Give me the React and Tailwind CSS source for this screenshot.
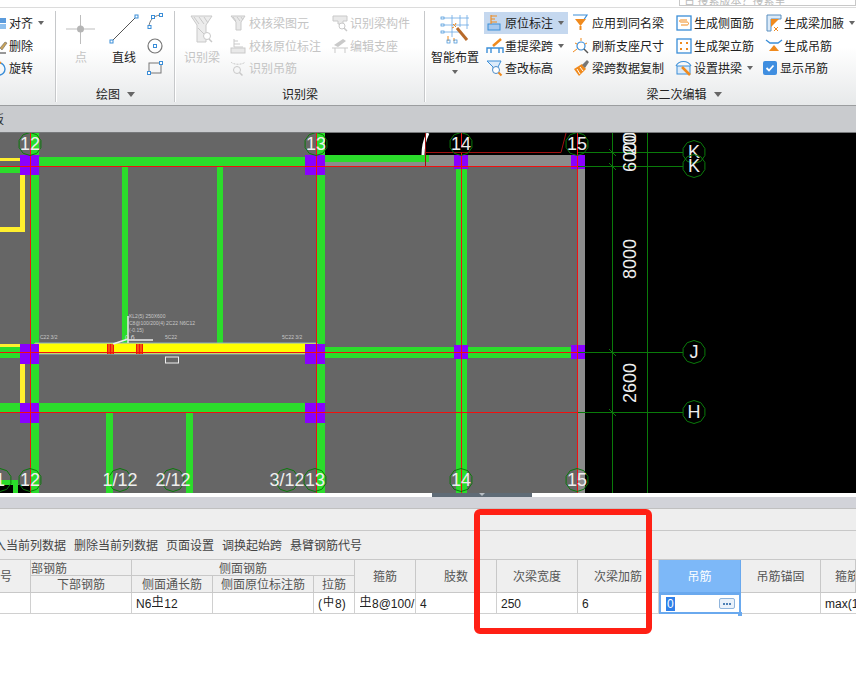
import React from "react";

const GREEN = "#2bdc2b";
const PURPLE = "#8a00ff";
const RED = "#f01010";
const DARK = "#0a7a0a";
const BLUE = "#3b8ed8";
const ORANGE = "#f08a1d";
const OFF = "#c9c9c9";

const Ico = ({ w = 18, h = 18, children }) => (
  <svg width={w} height={h} viewBox={`0 0 ${w} ${h}`} fill="none" className="shrink-0">
    {children}
  </svg>
);

const Caret = ({ className = "" }) => (
  <span className={`inline-block w-0 h-0 border-x-[3px] border-t-[4px] border-x-transparent border-t-[#666] ${className}`} />
);

const Item = ({ icon, label, caret, off, active, className = "" }) => (
  <div className={`flex items-center h-full whitespace-nowrap ${active ? "bg-[#c5d8ef]" : ""} ${off ? "text-[#c4c4c4]" : "text-[#222]"} ${className}`}>
    {icon}
    <span className="ml-px">{label}</span>
    {caret && <Caret className="ml-[5px]" />}
  </div>
);

const Col = ({ className = "", children }) => (
  <div className={`grid grid-rows-[22px_23px_22px] pt-1 h-[71px] ${className}`}>{children}</div>
);

const Big = ({ icon, label, off, caret, className = "" }) => (
  <div className={`flex flex-col items-center pt-1.5 shrink-0 ${className}`}>
    <div className="h-[30px] flex items-center justify-center">{icon}</div>
    <div className={`mt-1 h-[18px] leading-[18px] whitespace-nowrap ${off ? "text-[#c4c4c4]" : "text-[#222]"}`}>{label}</div>
    {caret && <Caret className="mt-1" />}
  </div>
);

const Section = ({ width, label, caret, labelClass = "", children }) => (
  <div className={`flex flex-col shrink-0 overflow-hidden ${width}`}>
    <div className="flex h-[77px]">{children}</div>
    <div className={`h-[18px] flex items-center justify-center gap-[7px] text-[#222] ${labelClass}`}>
      {label}
      {caret && <Caret className="border-x-[4px] border-t-[5px]" />}
    </div>
  </div>
);

const Sep = () => <div className="w-[2px] my-[3px] shrink-0 border-l border-[#c6c8ca] bg-white" />;

const Sq = ({ x, y }) => <rect x={x - 1.5} y={y - 1.5} width="3" height="3" fill="#fff" stroke={BLUE} />;

// small gray beam cross-section used by the disabled commands
const BeamOff = () => (
  <Ico>
    <path d="M2 2h14l-4 6v8H7V8z" stroke={OFF} fill="#e9e9e9" />
    <path d="M4 3l3 4M8 3l3 4M12 3l2 3" stroke={OFF} />
  </Ico>
);

const ic = {
  align: (
    <Ico w={8}>
      <rect x="-3" y="4" width="9" height="5" fill="#5b9bdc" />
      <rect x="-3" y="10" width="9" height="5" fill="#8fc0ee" />
    </Ico>
  ),
  del: (
    <Ico w={8}>
      <path d="M0 11l5-6 2 1-5 7z" fill="#c9a45a" stroke="#555" strokeWidth=".5" />
      <path d="M0 16h6" stroke="#333" />
    </Ico>
  ),
  rot: (
    <Ico w={8}>
      <circle cx="-1" cy="10" r="6" stroke={BLUE} strokeWidth="1.4" />
      <path d="M-2 3l3 1" stroke={ORANGE} strokeWidth="2" />
    </Ico>
  ),
  point: (
    <Ico w={30} h={30}>
      <path d="M0 15h29M14.5 1v29" stroke="#bdbdbd" />
      <circle cx="14.5" cy="15" r="3.5" fill="#b5b5b5" />
    </Ico>
  ),
  line: (
    <Ico w={30} h={30}>
      <path d="M3 27L27 3" stroke="#555" />
      <Sq x={2.5} y={27.5} />
      <Sq x={27.5} y={2.5} />
    </Ico>
  ),
  arc: (
    <Ico>
      <path d="M3 15C3 9 7 4 14 3" stroke="#777" />
      <Sq x={3.5} y={15} />
      <Sq x={7} y={5} />
      <Sq x={15} y={3} />
    </Ico>
  ),
  circle: (
    <Ico>
      <circle cx="9" cy="9" r="7" stroke="#777" strokeWidth="1.2" />
      <Sq x={9} y={9} />
    </Ico>
  ),
  rect: (
    <Ico>
      <rect x="3" y="4" width="12" height="10" stroke="#777" />
      <Sq x={3} y={14} />
      <Sq x={15} y={4} />
    </Ico>
  ),
  bigBeam: (
    <Ico w={26} h={30}>
      <path d="M2 2h21l-6 9v17H8V11z" stroke={OFF} fill="#ececec" />
      <path d="M5 3l5 7M10 3l5 7M15 3l4 6M9 14l7 7" stroke={OFF} />
      <circle cx="18" cy="22" r="3.5" stroke={OFF} fill="#fff" />
      <path d="M20 25l3 3" stroke={OFF} strokeWidth="1.5" />
    </Ico>
  ),
  check: <BeamOff />,
  checkNote: (
    <Ico>
      <path d="M5 2v8h9" stroke={OFF} />
      <path d="M5 4h4M5 7h6" stroke={OFF} />
      <rect x="2" y="11" width="14" height="5" stroke={OFF} fill="#e9e9e9" />
    </Ico>
  ),
  hang: (
    <Ico>
      <path d="M2 3c2 3 12 3 14 0" stroke={OFF} strokeDasharray="2 1" />
      <circle cx="8" cy="11" r="3.5" stroke={OFF} />
      <path d="M10.5 13.5l3 3" stroke={OFF} strokeWidth="1.5" />
    </Ico>
  ),
  support: (
    <Ico>
      <path d="M3 8l9-6 3 2-8 6z" fill={OFF} />
      <path d="M1 11h16M4 11v5M14 11v5" stroke={OFF} />
    </Ico>
  ),
  smart: (
    <Ico w={30} h={30}>
      <path d="M4 4h25M4 11h25M4 18h16M12 1v22M20 1v12M27 1v14" stroke="#6aa8e4" strokeWidth=".8" />
      <path d="M17 14l10 12" stroke="#b86a2a" strokeWidth="3" />
      <path d="M13 10l3 3M12 14l2-1M16 9l-1 2" stroke={ORANGE} />
      <rect x="1" y="3" width="3" height="2" stroke={BLUE} strokeWidth=".7" />
      <rect x="1" y="10" width="3" height="2" stroke={BLUE} strokeWidth=".7" />
      <rect x="1" y="17" width="3" height="2" stroke={BLUE} strokeWidth=".7" />
      <path d="M8 22v5M14 24v3" stroke={ORANGE} />
      <rect x="7" y="26" width="3" height="3" stroke={BLUE} strokeWidth=".7" />
      <rect x="14" y="26" width="3" height="3" stroke={BLUE} strokeWidth=".7" />
    </Ico>
  ),
  origin: (
    <Ico>
      <rect x="2" y="10" width="12" height="6" fill="#a6c8ee" stroke={BLUE} />
      <path d="M5 1v9M5 2h6M5 5h4M5 8h6" stroke={ORANGE} strokeWidth="1.1" />
    </Ico>
  ),
  relift: (
    <Ico>
      <path d="M1 16v-5h16v5M5 11v5M13 11v5" stroke={BLUE} strokeWidth="1.4" />
      <path d="M7 9l8-7" stroke={ORANGE} strokeWidth="2.5" />
    </Ico>
  ),
  height: (
    <Ico>
      <path d="M1 2h14l-3 6v3H7V8z" stroke={BLUE} fill="#dcebf9" />
      <circle cx="10" cy="11" r="3.5" stroke="#4d8cc8" fill="#fff" />
      <path d="M12.5 13.5l3 3" stroke={ORANGE} strokeWidth="2" />
    </Ico>
  ),
  apply: (
    <Ico>
      <path d="M1 1h14l-4 6" stroke={BLUE} strokeWidth="1.2" />
      <path d="M3 5h11l-5.5 7z" fill={ORANGE} />
      <path d="M8.5 12v4" stroke={ORANGE} strokeWidth="2" />
    </Ico>
  ),
  refresh: (
    <Ico>
      <circle cx="9" cy="9" r="4" stroke={BLUE} strokeWidth="1.2" />
      <path d="M9 1v3M3 6l2 1M15 6l-2 1M1 15l4-3" stroke={ORANGE} />
      <path d="M12 12l4 4" stroke="#555" strokeWidth="1.5" />
    </Ico>
  ),
  copy: (
    <Ico>
      <path d="M2 10l8-5 4 5-7 7z" fill={ORANGE} />
      <path d="M10 6l5-5 2 2-4 6z" fill="#777" />
      <path d="M5 10l3 5M8 8l3 4" stroke="#fff" />
    </Ico>
  ),
  side: (
    <Ico>
      <rect x="2" y="2" width="14" height="14" stroke={BLUE} strokeWidth="1.3" />
      <path d="M12 6H6c-2 0-2 2 0 2h6c2 0 2 3 0 3H6" stroke={ORANGE} />
    </Ico>
  ),
  frame: (
    <Ico>
      <rect x="2" y="2" width="14" height="14" stroke={BLUE} strokeWidth="1.3" />
      <path d="M5 5h2v2H5zM11 5h2v2h-2zM5 11h2v2H5zM11 11h2v2h-2z" fill={ORANGE} />
    </Ico>
  ),
  arch: (
    <Ico>
      <path d="M1 7C4 1 13 1 16 7" stroke={BLUE} strokeWidth="1.2" />
      <rect x="2" y="7" width="13" height="8" stroke={BLUE} fill="#dcebf9" />
      <path d="M7 8l8 8" stroke={ORANGE} strokeWidth="2.5" />
    </Ico>
  ),
  haunch: (
    <Ico>
      <path d="M2 1h14v4H6v12H2z" stroke="#5a8fbf" fill="#dcebf9" />
      <path d="M6 5h8L6 13z" fill={ORANGE} />
      <path d="M9 13l4 4M13 13l-4 4" stroke={ORANGE} />
    </Ico>
  ),
  hanger: (
    <Ico>
      <path d="M1 3l4 3h8l4-3" stroke={BLUE} strokeWidth="1.3" />
      <path d="M4 14l5-6 5 6z" fill={ORANGE} />
    </Ico>
  ),
  checked: (
    <span className="w-[14px] h-[14px] mr-[2px] rounded-[2px] bg-[#3f8ee0] flex items-center justify-center shrink-0">
      <svg width="10" height="10" viewBox="0 0 10 10" fill="none">
        <path d="M1.5 5l2.5 2.5 4.5-5" stroke="#fff" strokeWidth="1.8" />
      </svg>
    </span>
  ),
  copyOff: (
    <Ico>
      <path d="M2 2h14v5h-4v3H7V7H2z" stroke={OFF} fill="#e9e9e9" />
      <circle cx="11" cy="12" r="3" stroke={OFF} fill="#fff" />
      <path d="M13 14l3 3" stroke={OFF} strokeWidth="1.5" />
    </Ico>
  ),
};

const Ribbon = () => (
  <div className="flex h-[97px] border-b border-[#9b9d9f] bg-gradient-to-b from-white from-40% to-[#e7e9ea] box-content">
    <Section width="w-[55px]">
      <Col>
        <Item icon={ic.align} label="对齐" caret />
        <Item icon={ic.del} label="删除" />
        <Item icon={ic.rot} label="旋转" />
      </Col>
    </Section>
    <Sep />
    <Section width="w-[117px]" label="绘图" caret>
      <Big className="w-12" icon={ic.point} label="点" off />
      <Big className="w-[38px]" icon={ic.line} label="直线" />
      <Col className="w-6 justify-items-center">
        {ic.arc}
        <div className="self-center">{ic.circle}</div>
        <div className="self-center">{ic.rect}</div>
      </Col>
    </Section>
    <Sep />
    <Section width="w-[248px]" label="识别梁">
      <Big className="w-[52px]" icon={ic.bigBeam} label="识别梁" off />
      <Col className="w-[103px] pl-px">
        <Item icon={ic.check} label="校核梁图元" off className="gap-px" />
        <Item icon={ic.checkNote} label="校核原位标注" off className="gap-px" />
        <Item icon={ic.hang} label="识别吊筋" off className="gap-px" />
      </Col>
      <Col>
        <Item icon={ic.copyOff} label="识别梁构件" off />
        <Item icon={ic.support} label="编辑支座" off />
      </Col>
    </Section>
    <Sep />
    <Section width="flex-1 min-w-0" label="梁二次编辑" caret labelClass="pl-[86px]">
      <Big className="w-[58px]" icon={ic.smart} label="智能布置" caret />
      <Col className="w-[86px]">
        <Item icon={ic.origin} label="原位标注" caret active className="pl-0.5 mr-0.5" />
        <Item icon={ic.relift} label="重提梁跨" caret className="pl-0.5" />
        <Item icon={ic.height} label="查改标高" className="pl-0.5" />
      </Col>
      <Col className="w-[105px]">
        <Item icon={ic.apply} label="应用到同名梁" className="pl-0.5 gap-px" />
        <Item icon={ic.refresh} label="刷新支座尺寸" className="pl-0.5 gap-px" />
        <Item icon={ic.copy} label="梁跨数据复制" className="pl-0.5 gap-px" />
      </Col>
      <Col className="w-[90px]">
        <Item icon={ic.side} label="生成侧面筋" />
        <Item icon={ic.frame} label="生成架立筋" />
        <Item icon={ic.arch} label="设置拱梁" caret />
      </Col>
      <Col className="flex-1 min-w-0">
        <Item icon={ic.haunch} label="生成梁加腋" caret />
        <Item icon={ic.hanger} label="生成吊筋" />
        <Item icon={ic.checked} label="显示吊筋" className="-ml-0.5" />
      </Col>
    </Section>
  </div>
);

// rough decagon, the axis bubbles in the CAD view aren't true circles
const bubble = (cx, cy, r = 11.5) =>
  Array.from({ length: 10 }, (_, i) => {
    const a = (Math.PI / 5) * i + Math.PI / 10;
    return `${(cx + r * Math.cos(a)).toFixed(1)},${(cy + r * Math.sin(a)).toFixed(1)}`;
  }).join(" ");

const Axis = ({ x, y, t, size = 18 }) => (
  <g>
    <polygon points={bubble(x, y)} stroke={DARK} fill="none" />
    <text x={x} y={y + size * 0.36} textAnchor="middle" fontSize={size} fill="#eee">
      {t}
    </text>
  </g>
);

const R = ({ x, y, w, h, f }) => <rect x={x} y={y} width={w} height={h} fill={f} />;

const Dim = ({ y, t }) => (
  <text x="0" y="0" transform={`translate(636 ${y}) rotate(-90)`} textAnchor="middle" fontSize="18" fill="#eee">
    {t}
  </text>
);

const Canvas = () => (
  <svg width="856" height="360" viewBox="0 133 856 360" className="block bg-black font-['Liberation_Sans',sans-serif]">
    {/* slab */}
    <R x={0} y={133} w={325} h={360} f="#666" />
    <R x={325} y={162} w={253} h={331} f="#666" />
    <R x={325} y={155} w={253} h={11} f="#8c8c8c" />
    <R x={578} y={155} w={7} h={338} f="#8c8c8c" />

    {/* left part, yellow edge beams */}
    <R x={0} y={158} w={20} h={3} f="#ffef2e" />
    <R x={0} y={167} w={20} h={6} f={GREEN} />
    <R x={20} y={175} w={5} h={57} f="#ffef2e" />
    <R x={0} y={227} w={25} h={5} f="#ffef2e" />
    <R x={20} y={364} w={5} h={39} f="#ffef2e" />
    <R x={0} y={344} w={20} h={3} f="#ffef2e" />
    <R x={0} y={347} w={20} h={11} f={GREEN} />

    {/* green beams */}
    <R x={30} y={133} w={9} h={360} f={GREEN} />
    <R x={316} y={133} w={9} h={360} f={GREEN} />
    <R x={39} y={157} w={266} h={10} f={GREEN} />
    <R x={325} y={155} w={104} h={7} f={GREEN} />
    <R x={122} y={167} w={6} h={176} f={GREEN} />
    <R x={217} y={167} w={6} h={176} f={GREEN} />
    <R x={0} y={403} w={325} h={9} f={GREEN} />
    <R x={106} y={413} w={7} h={80} f={GREEN} />
    <R x={186} y={413} w={7} h={80} f={GREEN} />
    <R x={325} y={347} w={253} h={11} f={GREEN} />
    <R x={456} y={166} w={11} h={327} f={GREEN} />

    {/* bottom left corner */}
    <R x={0} y={480} w={18} h={5} f={GREEN} />
    <R x={13} y={485} w={5} h={8} f={GREEN} />
    <R x={0} y={485} w={13} h={8} f="#000" />
    <R x={18} y={485} w={12} h={8} f="#000" />

    {/* selected beam */}
    <path d="M35 343H317L322 354H30z" fill="#ffff00" stroke="#8fb4c8" />
    <R x={107} y={344} w={7} h={10} f={RED} />
    <R x={136} y={344} w={7} h={10} f={RED} />
    <path d="M109 344v10M112 344v10M138 344v10M141 344v10" stroke="#ffff00" strokeWidth=".6" />

    {/* columns */}
    <R x={20} y={155} w={19} h={20} f={PURPLE} />
    <R x={305} y={155} w={20} h={20} f={PURPLE} />
    <R x={20} y={344} w={19} h={20} f={PURPLE} />
    <R x={305} y={344} w={20} h={20} f={PURPLE} />
    <R x={20} y={403} w={19} h={20} f={PURPLE} />
    <R x={305} y={403} w={20} h={20} f={PURPLE} />
    <R x={454} y={155} w={14} h={14} f={PURPLE} />
    <R x={571} y={155} w={14} h={14} f={PURPLE} />
    <R x={454} y={345} w={14} h={14} f={PURPLE} />
    <R x={571} y={345} w={14} h={14} f={PURPLE} />

    {/* axis lines */}
    <path d="M0 166.5H578M0 352.5H578M0 412.5H578" stroke={RED} />
    <path d="M30.5 133V493M316.5 133V493M461.5 133V493M577.5 133V493" stroke={RED} />
    <path d="M578 152.5H683M578 166.5H683M578 352.5H683M578 412.5H683" stroke={DARK} />
    <path d="M612.5 133V493M647.5 133V493" stroke={DARK} />
    <path d="M609 149l7 7M609 163l7 7M609 349l7 7M609 409l7 7" stroke={DARK} />

    {/* arc at the top edge */}
    <path d="M423 155C423 146 425 139 428 133" stroke="#fff" strokeWidth="3" />
    <path d="M425.5 133V166M425 152.5H561L566 133" stroke="#a01010" />

    {/* beam annotation + ucs */}
    <g fill="#c8c8c8" fontSize="5">
      <text x="129" y="318">KL2(5) 250X600</text>
      <text x="129" y="325">C8@100/200(4) 2C22 N6C12</text>
      <text x="129" y="332">(-0.15)</text>
      <text x="40" y="339">C22 3/2</text>
      <text x="165" y="339">5C22</text>
      <text x="282" y="339">5C22 3/2</text>
    </g>
    <path d="M128 316V343M128 340H153M128 339l-15 5" stroke="#eee" strokeWidth="1.4" />
    <text x="125" y="340" fontSize="7" fill="#ddd">0.6</text>
    <rect x="165.5" y="357" width="13" height="6" fill="none" stroke="#eee" />

    <Axis x={30} y={144} t="12" />
    <Axis x={316} y={144} t="13" />
    <Axis x={461} y={144} t="14" />
    <Axis x={577} y={144} t="15" />
    <Axis x={0} y={480} t="1" />
    <Axis x={30} y={480} t="12" />
    <Axis x={120} y={480} t="1/12" />
    <Axis x={173} y={480} t="2/12" />
    <Axis x={287} y={480} t="3/12" />
    <Axis x={315} y={480} t="13" />
    <Axis x={461} y={480} t="14" />
    <Axis x={577} y={480} t="15" />
    <Axis x={694} y={152} t="K" />
    <Axis x={694} y={166} t="K" />
    <Axis x={694} y={352} t="J" />
    <Axis x={694} y={412} t="H" />

    <Dim y={152} t="6000" />
    <Dim y={140} t="200" />
    <Dim y={259} t="8000" />
    <Dim y={383} t="2600" />
    <Dim y={500} t="0" />
  </svg>
);

// rebar grade glyph, 中 with a foot bar
const Bar3 = () => (
  <span className="inline-block text-[11px] leading-[10px] border-b border-[#222] h-[11px] -translate-y-[2px] mx-px">中</span>
);

const Th = ({ className = "", children }) => (
  <div className={`flex items-center justify-center border-r border-b border-[#c8c8c8] bg-[#efefef] text-[#555] whitespace-nowrap overflow-hidden ${className}`}>
    {children}
  </div>
);

const Td = ({ className = "", children }) => (
  <div className={`flex items-center pl-1 pt-px border-r border-b border-[#d0d0d0] text-[#222] whitespace-nowrap overflow-hidden font-['Liberation_Sans','Noto_Sans_CJK_SC',sans-serif] ${className}`}>
    {children}
  </div>
);

const BeamTable = () => (
  <div className="grid grid-cols-[31px_101px_81px_101px_41px_61px_81px_81px_81px_82px_80px_35px] grid-rows-[16px_17px_21px]">
    <Th className="row-span-2 !justify-start">号</Th>
    <Th className="!justify-start">部钢筋</Th>
    <Th className="col-span-3">侧面钢筋</Th>
    <Th className="row-span-2 col-start-6 row-start-1">箍筋</Th>
    <Th className="row-span-2">肢数</Th>
    <Th className="row-span-2">次梁宽度</Th>
    <Th className="row-span-2">次梁加筋</Th>
    <Th className="row-span-2 !bg-[#7db8f8] !border-[#6aa9ee] !text-white">吊筋</Th>
    <Th className="row-span-2">吊筋锚固</Th>
    <Th className="row-span-2 !justify-start pl-[14px]">箍筋</Th>
    <Th className="col-start-2 row-start-2">下部钢筋</Th>
    <Th>侧面通长筋</Th>
    <Th>侧面原位标注筋</Th>
    <Th>拉筋</Th>

    <Td />
    <Td />
    <Td>
      N6
      <Bar3 />
      12
    </Td>
    <Td />
    <Td>
      (<span className="text-[11px] mx-px -translate-y-px">中</span>8)
    </Td>
    <Td>
      <Bar3 />
      8@100/
    </Td>
    <Td>4</Td>
    <Td>250</Td>
    <Td>6</Td>
    <div className="relative flex items-center justify-between pl-[5px] pr-1 border-2 border-[#6aa9ee] bg-white">
      <span className="bg-[#2f7fe8] text-white px-px leading-[14px] font-['Liberation_Sans',sans-serif]">0</span>
      <span className="flex items-center justify-center gap-px w-4 h-[11px] rounded-[2px] border border-[#8fb4dc] bg-[#e9f1fa]">
        <span className="w-[2px] h-[2px] bg-[#4d7fb5]" />
        <span className="w-[2px] h-[2px] bg-[#4d7fb5]" />
        <span className="w-[2px] h-[2px] bg-[#4d7fb5]" />
      </span>
      <span className="absolute -right-[3px] -bottom-[4px] w-1 h-1 bg-[#6aa9ee]" />
    </div>
    <Td />
    <Td className="border-r-0">max(1</Td>
  </div>
);

const App = () => {
  return (
    <div className="relative w-[856px] h-[675px] overflow-hidden bg-white text-xs font-['Noto_Sans_CJK_SC',sans-serif]">
      <div className="h-[7px] flex justify-end">
        <div className="w-[177px] h-[6px] border border-t-0 border-[#c8c8c8] overflow-hidden text-[11px] leading-[1px] text-[#bbb] pl-1">
          日 搜索版本？搜索里
        </div>
      </div>
      <div className="h-px bg-[#dcdcdc]" />
      <Ribbon />
      <div className="h-[26px] box-content border-b border-[#77797b] bg-[#c9cbce] overflow-hidden flex items-center text-[#333]">
        <span className="-ml-[8px]">板</span>
      </div>
      <Canvas />
      <div className="relative h-1 bg-white">
        <div className="absolute left-[432px] top-0 w-[100px] h-1 bg-[#5f6b76] flex justify-center">
          <span className="w-0 h-0 border-x-[3px] border-t-[3px] border-x-transparent border-t-[#b8bec4]" />
        </div>
      </div>
      <div className="h-[11px] box-content border-b border-[#c0c0c0] bg-[#d2d3d9]" />
      <div className="h-[21px] box-content border-b border-[#c8c8c8] bg-[#eee]" />
      <div className="h-7 box-content border-b border-[#c8c8c8] bg-[#eee] flex items-center gap-2 -ml-[6px] text-[#444] whitespace-nowrap">
        <span>入当前列数据</span>
        <span>删除当前列数据</span>
        <span>页面设置</span>
        <span>调换起始跨</span>
        <span>悬臂钢筋代号</span>
      </div>
      <BeamTable />
      {/* red highlight drawn over the screenshot */}
      <div className="absolute left-[474px] top-[509px] w-[178px] h-[125px] border-[6px] border-[#ff2015] rounded-md" />
    </div>
  );
};

export default App;
